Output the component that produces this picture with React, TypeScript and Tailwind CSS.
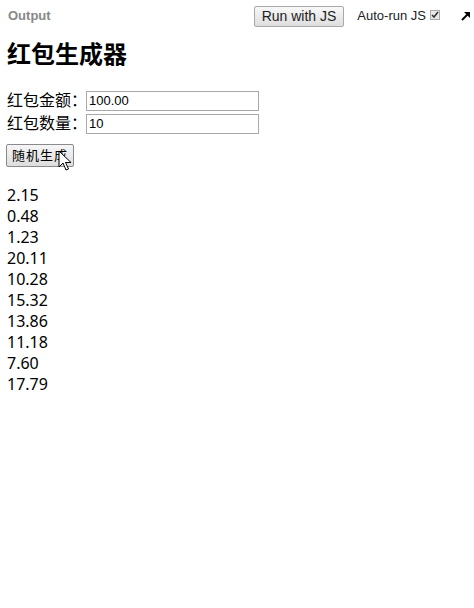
import React from 'react';

const amounts = ['2.15', '0.48', '1.23', '20.11', '10.28', '15.32', '13.86', '11.18', '7.60', '17.79'];

const font = { fontFamily: '"Noto Sans", "Noto Sans CJK SC", sans-serif' };
const arial = { fontFamily: '"Liberation Sans", Arial, sans-serif' };

const App: React.FC = () => {
  return (
    <div className="w-[474px] h-[608px] bg-white text-black overflow-hidden" style={font}>
      {/* toolbar */}
      <div className="h-[32px] flex items-center pl-2 pr-[2px] text-[13px]" style={arial}>
        <span className="font-bold text-[#888]">Output</span>
        <div className="ml-auto flex items-center">
          <button className="h-[21px] px-[7px] border border-[#a9a9a9] rounded-[2px] bg-gradient-to-b from-[#f8f8f8] to-[#dedede] text-[14px] text-[#222] leading-none">
            Run with JS
          </button>
          <span className="ml-[13px] text-[#222]">Auto-run JS</span>
          <span className="ml-[4px] w-[10px] h-[10px] border border-[#aaa] bg-[#e8e8e8] flex items-center justify-center mb-[3px]">
            <svg width="8" height="8" viewBox="0 0 8 8">
              <path d="M1 4 L3 6 L7 1" stroke="#333" strokeWidth="1.6" fill="none" />
            </svg>
          </span>
          <svg className="ml-[20px]" width="12" height="12" viewBox="0 0 12 12">
            <path d="M2 10 L9 3" stroke="#000" strokeWidth="2" />
            <path d="M4 2 H10 V8 Z" fill="#000" />
          </svg>
        </div>
      </div>

      <div className="px-[7px]">
        <h1 className="text-[24px] font-bold leading-none mt-[10px] mb-[23px]">红包生成器</h1>

        <div className="text-[16px] leading-[23px]">
          <div className="flex items-center h-[23px]">
            <span className="w-[79px] shrink-0 whitespace-nowrap">红包金额：</span>
            <input
              readOnly
              value="100.00"
              className="w-[173px] h-[20px] border border-[#a9a9a9] px-[2px] text-[13px] outline-none"
              style={arial}
            />
          </div>
          <div className="flex items-center h-[23px]">
            <span className="w-[79px] shrink-0 whitespace-nowrap">红包数量：</span>
            <input
              readOnly
              value="10"
              className="w-[173px] h-[20px] border border-[#a9a9a9] px-[2px] text-[13px] outline-none"
              style={arial}
            />
          </div>
        </div>

        <div className="relative mt-[7px] w-fit">
          <button className="h-[23px] w-[68px] -ml-[1px] border border-[#8a8a8a] rounded-[2px] bg-gradient-to-b from-[#f6f6f6] to-[#dddddd] text-[13px] tracking-[1px] leading-none">
            随机生成
          </button>
          <svg className="absolute left-[51px] top-[8px]" width="14" height="22" viewBox="0 0 14 22">
            <path d="M1 1 L1 17 L5 13 L8 20 L10.5 19 L7.5 12.5 L13 12.5 Z" fill="#fff" stroke="#000" strokeWidth="1" strokeLinejoin="round" />
          </svg>
        </div>

        <div className="mt-[18px] text-[16px] leading-[21px]">
          {amounts.map((a, i) => (
            <div key={i}>{a}</div>
          ))}
        </div>
      </div>
    </div>
  );
};

export default App;
